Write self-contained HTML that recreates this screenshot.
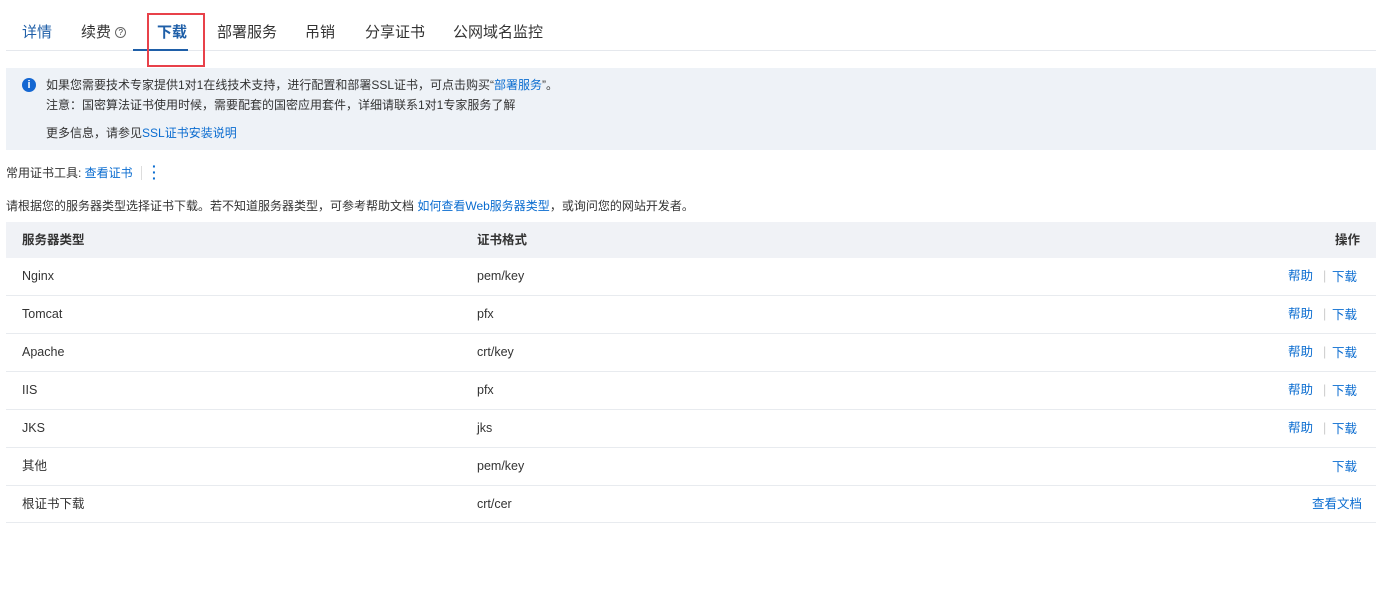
<!DOCTYPE html>
<html><head><meta charset="utf-8"><style>
*{margin:0;padding:0;box-sizing:border-box}
body{width:1400px;height:594px;background:#fff;font-family:"Liberation Sans","Noto Sans CJK SC",sans-serif;color:#333;font-size:12px;position:relative;overflow:hidden}
.a{position:absolute;white-space:nowrap;line-height:14px}
.l{color:#0a6cd0}
.tab{position:absolute;top:24px;font-size:15px;color:#333;line-height:18px}
.row{position:absolute;left:6px;width:1370px;height:38px;border-bottom:1px solid #e8ebef;font-size:12.5px}
.row span{position:absolute;top:0;line-height:37px}
</style></head><body>
<div class="a" style="left:6px;top:50px;width:1370px;height:1px;background:#e5e8ed"></div>
<div class="tab l" style="left:22px;color:#1f5fa8">详情</div>
<div class="tab" style="left:81px">续费 <span style="display:inline-block;width:11px;height:11px;border:1px solid #666;border-radius:50%;line-height:9px;text-align:center;font-size:8px;vertical-align:2px">?</span></div>
<div class="tab" style="left:157px;font-weight:bold;color:#1f5fa8">下载</div>
<div class="a" style="left:133px;top:49px;width:55px;height:2px;background:#1f5fa8"></div>
<div class="a" style="left:147px;top:13px;width:58px;height:54px;border:2px solid #e8414a"></div>
<div class="tab" style="left:217px">部署服务</div>
<div class="tab" style="left:305px">吊销</div>
<div class="tab" style="left:365px">分享证书</div>
<div class="tab" style="left:453px">公网域名监控</div>

<div class="a" style="left:6px;top:68px;width:1370px;height:82px;background:#eef2f7"></div>
<div class="a" style="left:22px;top:78px;width:14px;height:14px;border-radius:50%;background:#1467d2;color:#fff;font-size:11px;font-weight:bold;text-align:center;line-height:14px">i</div>
<div class="a" style="left:46px;top:78px">如果您需要技术专家提供1对1在线技术支持，进行配置和部署SSL证书，可点击购买“<span class="l">部署服务</span>”。</div>
<div class="a" style="left:46px;top:98px">注意：国密算法证书使用时候，需要配套的国密应用套件，详细请联系1对1专家服务了解</div>
<div class="a" style="left:46px;top:126px">更多信息，请参见<span class="l">SSL证书安装说明</span></div>

<div class="a" style="left:6px;top:166px">常用证书工具: <span class="l">查看证书</span></div>
<div class="a" style="left:141px;top:166px;width:1px;height:14px;background:#ddd"></div>
<div class="a l" style="left:152px;top:163px;font-weight:bold;font-size:14px;line-height:6px">·<br>·<br>·</div>
<div class="a" style="left:6px;top:199px">请根据您的服务器类型选择证书下载。若不知道服务器类型，可参考帮助文档 <span class="l">如何查看Web服务器类型</span>，或询问您的网站开发者。</div>

<div class="row" style="top:222px;height:36px;background:#f0f2f6;border:none;font-weight:bold"><span style="left:16px;line-height:36px">服务器类型</span><span style="left:471px;line-height:36px">证书格式</span><span style="right:16px;line-height:36px">操作</span></div>
<div class="row" style="top:258px"><span style="left:16px">Nginx</span><span style="left:471px">pem/key</span><span class="l" style="left:1282px">帮助</span><span style="left:1317px;color:#ccc">|</span><span class="l" style="left:1326px;top:1px">下载</span></div>
<div class="row" style="top:296px"><span style="left:16px">Tomcat</span><span style="left:471px">pfx</span><span class="l" style="left:1282px">帮助</span><span style="left:1317px;color:#ccc">|</span><span class="l" style="left:1326px;top:1px">下载</span></div>
<div class="row" style="top:334px"><span style="left:16px">Apache</span><span style="left:471px">crt/key</span><span class="l" style="left:1282px">帮助</span><span style="left:1317px;color:#ccc">|</span><span class="l" style="left:1326px;top:1px">下载</span></div>
<div class="row" style="top:372px"><span style="left:16px">IIS</span><span style="left:471px">pfx</span><span class="l" style="left:1282px">帮助</span><span style="left:1317px;color:#ccc">|</span><span class="l" style="left:1326px;top:1px">下载</span></div>
<div class="row" style="top:410px"><span style="left:16px">JKS</span><span style="left:471px">jks</span><span class="l" style="left:1282px">帮助</span><span style="left:1317px;color:#ccc">|</span><span class="l" style="left:1326px;top:1px">下载</span></div>
<div class="row" style="top:448px"><span style="left:16px">其他</span><span style="left:471px">pem/key</span><span class="l" style="left:1326px;top:1px">下载</span></div>
<div class="row" style="top:486px;height:37px"><span style="left:16px">根证书下载</span><span style="left:471px">crt/cer</span><span class="l" style="left:1306px">查看文档</span></div>
</body></html>
